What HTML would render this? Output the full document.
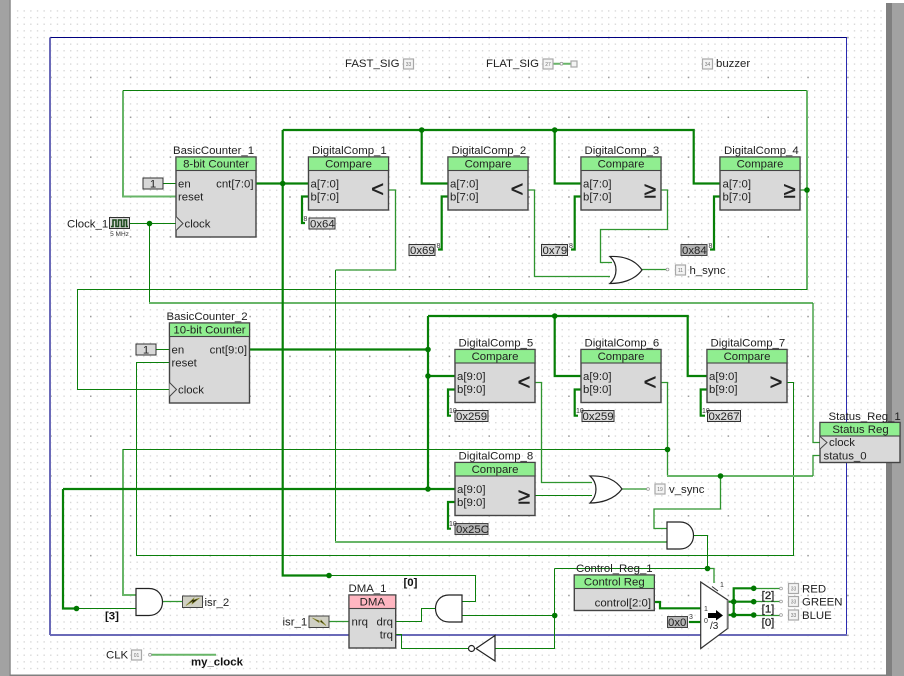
<!DOCTYPE html>
<html><head><meta charset="utf-8"><title>Schematic</title>
<style>
html,body{margin:0;padding:0;background:#fff;width:904px;height:676px;overflow:hidden}
svg{display:block;filter:blur(.3px)}
text{font-family:"Liberation Sans",sans-serif;font-size:11.4px;fill:#222}
.m{text-anchor:middle}.e{text-anchor:end}
.bd{font-weight:bold;fill:#111}
.s{font-size:7px;fill:#333}
.t{fill:none;stroke:#0b7f0b;stroke-width:1}
.b{fill:none;stroke:#68b568;stroke-width:2}
.u{fill:none;stroke:#2f952f;stroke-width:1.3}
.B{fill:none;stroke:#078007;stroke-width:2.2}
.box{fill:#d9d9d9;stroke:#444;stroke-width:1.4}
.hd{fill:#90ee90;stroke:#444;stroke-width:1.1}
.c{fill:#d8d8d8;stroke:#333;stroke-width:1}
.c2{fill:#b4b4b4;stroke:#444;stroke-width:1}
.g{fill:#fff;stroke:#222;stroke-width:1.2}
.j{fill:#007700}
.tm{fill:#f4f4f4;stroke:#a8a8a8;stroke-width:1.2}
.tx{font-size:5px;fill:#777}
.cmp{font-size:22px;fill:#222;stroke:#222;stroke-width:.45}
</style></head><body>
<svg width="904" height="676" viewBox="0 0 904 676" xmlns="http://www.w3.org/2000/svg">
<defs>
<pattern id="mn" x="3.65" y="3.64" width="6.642" height="6.642" patternUnits="userSpaceOnUse"><rect width="1.3" height="1.3" fill="#d2d2d2"/></pattern>
<pattern id="mj" x="10.3" y="36.85" width="39.85" height="39.85" patternUnits="userSpaceOnUse"><rect width="1.5" height="1.5" fill="#9a9a9a"/></pattern>
</defs>
<rect width="904" height="676" fill="#fff"/>
<rect x="14" y="8" width="868" height="664" fill="url(#mn)"/>
<rect x="14" y="8" width="868" height="664" fill="url(#mj)"/>
<rect x="0" y="0" width="9.5" height="676" fill="#a2a2a2"/>
<rect x="9.5" y="0" width="1.2" height="676" fill="#808080"/>
<rect x="886" y="3" width="6" height="673" fill="#808080"/>
<rect x="892" y="3" width="12" height="673" fill="#a2a2a2"/>
<rect x="10" y="674.5" width="882" height="1.5" fill="#808080"/>

<!-- frame -->
<path d="M50 38H847" stroke="#000080" stroke-width="1" fill="none" transform="translate(0,-.5)"/>
<path d="M50 37.5V635" stroke="#6a6ab8" stroke-width="2" fill="none"/>
<path d="M846.5 37.5V635" stroke="#2a2ab0" stroke-width="1" fill="none"/>
<path d="M50 635H847" stroke="#6a6ab8" stroke-width="2" fill="none"/>

<!-- thin wires -->
<path class="b" d="M176 196.5H123V90.5"/>
<path class="t" d="M123 90.5H807"/>
<path class="b" d="M807 90.5V290"/>
<path class="u" d="M800 190H807"/>
<path class="t" d="M807 289.5H77.5V389.5H170"/>
<path class="t" d="M163 183.5H176M130 223.5H176M149.5 223V303"/>
<path class="b" d="M149 303H813"/>
<path class="u" d="M813 303V442.5H820"/>
<path class="t" d="M156 349.5H170"/>
<path class="t" d="M170 362.5H136.5V555.5H793.5V382.5H787"/>
<path class="t" d="M335.5 270V542"/>
<path class="u" d="M389 190H395.5V270H335.5"/>
<path class="b" d="M335 542H667"/>
<path class="u" d="M528.5 190H534.5V276.5H610"/>
<path class="u" d="M661 190H667.5V229.5H600.5V262.5H612"/>
<path class="u" d="M642 269.5H668"/>
<path class="b" d="M123 449V595H136"/>
<path class="t" d="M123 449.5H667.5"/>
<path class="u" d="M534.7 382.5H541.5V482.5H592"/>
<path class="t" d="M534.7 495.5H592"/>
<path class="u" d="M661 382.5H667.5V475.5"/>
<path class="b" d="M667 476H813"/>
<path class="u" d="M813 476V455.5H820"/>
<path class="u" d="M622 489H648"/>
<path class="u" d="M720.5 476V509H654V528.5H667"/>
<path class="t" d="M694 535.5H707.5V568.5"/>
<path class="t" d="M76.5 608.5H136"/>
<path class="u" d="M163 601.5H182"/>
<path class="u" d="M329 621.5H349"/>
<path class="t" d="M329 575.5H475.5V601.5H462"/>
<path class="t" d="M395.7 621.5H421.5V608.5H435"/>
<path class="t" d="M462 615.5H554.5"/>
<path class="t" d="M554.5 568.5V648.5H495"/>
<path class="t" d="M554.5 568.5H707.5"/>
<path class="u" d="M707.5 568.5H714V583"/>
<path class="t" d="M468 648.5H401.5V634.5H395.7"/>
<path class="b" d="M150 654.7H216"/>
<path class="b" d="M553 63.7H571"/>
<path class="u" d="M753.7 588.5H780M753.7 601.5H780M753.7 615.5H780"/>
<path d="M712 586.5L718 591" stroke="#333" stroke-width="1" fill="none"/>

<!-- buses -->
<path class="B" d="M256 183.5H309M282.7 130H693.7V183.5H720M282.7 130V575.5H329"/>
<path class="B" d="M421.7 130V183.5H448M554.7 130V183.5H581"/>
<path class="B" d="M309 196.5H302V223H305"/>
<path class="B" d="M448 196.5H441.7V249.5H438"/>
<path class="B" d="M581 196.5H574.7V249.5H571"/>
<path class="B" d="M720 196.5H714V249.5H710"/>
<path class="B" d="M249.5 349.5H428M428 316V489M428 316H687.7V376H707"/>
<path class="B" d="M554.7 316V376H581M428 376H455M63 489H455M63 489V608.5H76.5"/>
<path class="B" d="M455 389.5H448V415.7H451M581 389.5H574.7V415.7H578M707 389.5H700.7V415.7H705M455 502H448V528.7H451"/>
<path class="B" d="M654 602H660V608.3H700.7"/>
<path class="B" d="M689 622H700.7"/>
<path class="B" d="M727.7 615H753.7M733.7 615V588.3H753.7M727.7 601.7H753.7" />

<!-- junctions -->
<g class="j">
<circle cx="149.5" cy="223.5" r="2.8"/><circle cx="282.7" cy="183.5" r="2.8"/><circle cx="421.7" cy="130" r="2.8"/><circle cx="554.7" cy="130" r="2.8"/>
<circle cx="807" cy="190" r="2.8"/><circle cx="428" cy="349.5" r="2.8"/><circle cx="428" cy="376" r="2.8"/><circle cx="428" cy="489" r="2.8"/>
<circle cx="554.7" cy="316" r="2.8"/><circle cx="667.5" cy="449.5" r="2.8"/><circle cx="720.5" cy="476" r="2.8"/><circle cx="76.5" cy="608.5" r="2.8"/>
<circle cx="329" cy="575.5" r="2.8"/><circle cx="554.7" cy="615.5" r="2.8"/><circle cx="707.5" cy="568.5" r="2.8"/>
<circle cx="733.7" cy="601.7" r="2.8"/><circle cx="733.7" cy="615" r="2.8"/><circle cx="753.7" cy="588.3" r="2.8"/><circle cx="753.7" cy="601.7" r="2.8"/><circle cx="753.7" cy="615" r="2.8"/>
</g>

<!-- counters -->
<rect class="box" x="176" y="157" width="80" height="80"/><rect class="hd" x="176" y="157" width="80" height="13.5"/>
<text x="173" y="154">BasicCounter_1</text><text class="m" x="216" y="167.5">8-bit Counter</text>
<text x="178" y="187.5">en</text><text x="178" y="200.5">reset</text><text x="184.5" y="227.5">clock</text><text class="e" x="253.5" y="187.5">cnt[7:0]</text>
<path d="M176 216.5L183 223.5L176 230.5" fill="#d9d9d9" stroke="#444" stroke-width="1"/>

<rect class="box" x="169.5" y="323" width="80" height="80"/><rect class="hd" x="169.5" y="323" width="80" height="13.5"/>
<text x="166.5" y="320">BasicCounter_2</text><text class="m" x="209.5" y="333.5">10-bit Counter</text>
<text x="171.5" y="353.5">en</text><text x="171.5" y="366.5">reset</text><text x="178" y="393.5">clock</text><text class="e" x="247" y="353.5">cnt[9:0]</text>
<path d="M169.5 382.5L176.5 389.5L169.5 396.5" fill="#d9d9d9" stroke="#444" stroke-width="1"/>

<!-- comparators row 1 -->
<g>
<rect class="box" x="308.5" y="157" width="80" height="53"/><rect class="hd" x="308.5" y="157" width="80" height="13.5"/>
<text x="312" y="154">DigitalComp_1</text><text class="m" x="348.5" y="167.5">Compare</text>
<text x="310.5" y="187.5">a[7:0]</text><text x="310.5" y="200.5">b[7:0]</text><text class="cmp m" x="377.5" y="196.5">&lt;</text>
<rect class="box" x="448" y="157" width="80" height="53"/><rect class="hd" x="448" y="157" width="80" height="13.5"/>
<text x="451.5" y="154">DigitalComp_2</text><text class="m" x="488" y="167.5">Compare</text>
<text x="450" y="187.5">a[7:0]</text><text x="450" y="200.5">b[7:0]</text><text class="cmp m" x="517" y="196.5">&lt;</text>
<rect class="box" x="581" y="157" width="80" height="53"/><rect class="hd" x="581" y="157" width="80" height="13.5"/>
<text x="584.5" y="154">DigitalComp_3</text><text class="m" x="621" y="167.5">Compare</text>
<text x="583" y="187.5">a[7:0]</text><text x="583" y="200.5">b[7:0]</text><text class="cmp m" x="650" y="197.5">≥</text>
<rect class="box" x="720" y="157" width="80" height="53"/><rect class="hd" x="720" y="157" width="80" height="13.5"/>
<text x="724" y="154">DigitalComp_4</text><text class="m" x="760" y="167.5">Compare</text>
<text x="722.5" y="187.5">a[7:0]</text><text x="722.5" y="200.5">b[7:0]</text><text class="cmp m" x="789.5" y="197.5">≥</text>
</g>
<!-- comparators row 2 -->
<g>
<rect class="box" x="455" y="349.5" width="80" height="53"/><rect class="hd" x="455" y="349.5" width="80" height="13.5"/>
<text x="458.5" y="346.5">DigitalComp_5</text><text class="m" x="495" y="360">Compare</text>
<text x="457" y="380">a[9:0]</text><text x="457" y="393">b[9:0]</text><text class="cmp m" x="524" y="389.5">&lt;</text>
<rect class="box" x="581" y="349.5" width="80" height="53"/><rect class="hd" x="581" y="349.5" width="80" height="13.5"/>
<text x="584.5" y="346.5">DigitalComp_6</text><text class="m" x="621" y="360">Compare</text>
<text x="583" y="380">a[9:0]</text><text x="583" y="393">b[9:0]</text><text class="cmp m" x="650" y="389.5">&lt;</text>
<rect class="box" x="707" y="349.5" width="80" height="53"/><rect class="hd" x="707" y="349.5" width="80" height="13.5"/>
<text x="710.5" y="346.5">DigitalComp_7</text><text class="m" x="747" y="360">Compare</text>
<text x="709" y="380">a[9:0]</text><text x="709" y="393">b[9:0]</text><text class="cmp m" x="776" y="389.5">&gt;</text>
<rect class="box" x="455" y="462.5" width="80" height="53"/><rect class="hd" x="455" y="462.5" width="80" height="13.5"/>
<text x="458.5" y="459.5">DigitalComp_8</text><text class="m" x="495" y="473">Compare</text>
<text x="457" y="493">a[9:0]</text><text x="457" y="506">b[9:0]</text><text class="cmp m" x="524" y="503.5">≥</text>
</g>

<!-- constants -->
<rect class="c" x="143" y="178" width="20" height="11"/><text class="m" x="153" y="187.5">1</text>
<rect class="c" x="136" y="344" width="20" height="11"/><text class="m" x="146" y="353.5">1</text>
<rect class="c" x="309" y="218" width="26" height="11"/><text x="310" y="227.5">0x64</text><text class="s" x="303.5" y="221">8</text>
<rect class="c" x="409" y="244.5" width="26" height="11"/><text x="410" y="254">0x69</text><text class="s" x="436.5" y="248">8</text>
<rect class="c" x="541.5" y="244.5" width="26" height="11"/><text x="542.5" y="254">0x79</text><text class="s" x="569" y="248">8</text>
<rect class="c2" x="681" y="244.5" width="26" height="11"/><text x="682" y="254">0x84</text><text class="s" x="708.5" y="248">8</text>
<rect class="c" x="455" y="410.5" width="33" height="11"/><text x="456" y="420">0x259</text><text class="s" x="449" y="413">10</text>
<rect class="c" x="582" y="410.5" width="32" height="11"/><text x="582.5" y="420">0x259</text><text class="s" x="576" y="413">10</text>
<rect class="c" x="707.5" y="410.5" width="33" height="11"/><text x="708.5" y="420">0x267</text><text class="s" x="702" y="413">10</text>
<rect class="c2" x="455" y="523.5" width="33" height="11"/><text x="456" y="533">0x25C</text><text class="s" x="449" y="526">10</text>
<rect class="c2" x="667.5" y="616.5" width="20" height="11"/><text x="668" y="626">0x0</text><text class="s" x="689" y="619">3</text>

<!-- clock -->
<rect x="109.5" y="217.5" width="20" height="11" fill="#d8d8d8" stroke="#333"/>
<path d="M111 226.5H113V220H116V226.5H118.5V220H121.5V226.5H124V220H126.5V226.5H128" fill="none" stroke="#1d4a1d" stroke-width="1.6"/>
<text x="67" y="227.5">Clock_1</text><text class="s m" x="119.5" y="236" style="font-size:6.5px">5 MHz</text>

<!-- gates -->
<path class="g" d="M610 256.5C620 256 634 258 642 270C634 281 620 283.5 610 283.5C618 276 618 264 610 256.5Z"/>
<path class="g" d="M590 476C600 475.5 614 477 622 489C614 500 600 503 590 503C598 495 598 483 590 476Z"/>
<path class="g" d="M667 522H680C698 522 698 549 680 549H667Z"/>
<path class="g" d="M136 588.5H149C167 588.5 167 615.5 149 615.5H136Z"/>
<path class="g" d="M462 595H449C431 595 431 622 449 622H462Z"/>
<path class="g" d="M495 635.5V661L476 648.5Z"/>
<circle class="g" cx="471.5" cy="648.5" r="3"/>

<!-- DMA -->
<rect class="box" x="349" y="595" width="46.7" height="53"/><rect fill="#ffb6c1" stroke="#444" stroke-width="1.1" x="349" y="595" width="46.7" height="13.5"/>
<text x="348.5" y="592">DMA_1</text><text class="m" x="372.3" y="605.5">DMA</text>
<text x="351.5" y="625.5">nrq</text><text class="e" x="393" y="625.5">drq</text><text class="e" x="393" y="638.5">trq</text>

<!-- isr icons -->
<rect x="182.5" y="596" width="20" height="11.5" fill="#d0d0c4" stroke="#444"/>
<path d="M186 605.5L192.5 601.5L192 604L199.5 598L193.5 600L194 598Z" fill="#1c1c08" stroke="#8a8a30" stroke-width=".6"/>
<text x="204.5" y="606">isr_2</text>
<rect x="309" y="616" width="20" height="11.5" fill="#d0d0c4" stroke="#444"/>
<path d="M312.5 618L319 622.5L318.5 620.5L326 625.5L321 620L320.5 621.5Z" fill="#1c1c08" stroke="#8a8a30" stroke-width=".6"/>
<text x="282.5" y="625.5">isr_1</text>

<!-- control reg -->
<rect class="box" x="574.3" y="575" width="80" height="35.5"/><rect class="hd" x="574.3" y="575" width="80" height="13.5"/>
<text x="576" y="572">Control_Reg_1</text><text class="m" x="614.3" y="585.5">Control Reg</text><text class="e" x="651" y="606.5">control[2:0]</text>

<!-- status reg -->
<rect class="box" x="820" y="422.5" width="80" height="40"/><rect class="hd" x="820" y="422.5" width="80" height="13.5"/>
<text x="828.5" y="420">Status_Reg_1</text><text class="m" x="860.5" y="433">Status Reg</text>
<text x="829" y="446">clock</text><text x="823.5" y="459.5">status_0</text>
<path d="M820 436.5L827 442.5L820 449" fill="#d9d9d9" stroke="#444"/>

<!-- mux -->
<path d="M700.7 582L727.7 600V628.5L700.7 648.5Z" fill="#fff" stroke="#333" stroke-width="1.2"/>
<path d="M727.7 600V628.5" stroke="#777" stroke-width="2"/>
<path d="M708 613H716V610L723 615.5L716 620.5V618H708Z" fill="#000"/>
<text class="s" x="704" y="611">1</text><text class="s" x="704" y="623">0</text>
<text x="710" y="629" style="font-size:10px">/3</text><text class="s" x="720" y="587">1</text>

<!-- outputs -->
<g class="tm"><rect x="788.5" y="583.5" width="10" height="10"/><rect x="788.5" y="596.5" width="10" height="10"/><rect x="788.5" y="610" width="10" height="10"/>
<rect x="675.5" y="265" width="10" height="10"/><rect x="655" y="484" width="10" height="10"/>
<rect x="403.5" y="59" width="10" height="10"/><rect x="543" y="59" width="10" height="10"/><rect x="702.5" y="59" width="10" height="10"/><rect x="131.5" y="650" width="10" height="10"/><rect x="571" y="61" width="6" height="6"/></g>
<g class="tx" text-anchor="middle">
<text class="tx" x="793.5" y="590.5">33</text><text class="tx" x="793.5" y="603.5">33</text><text class="tx" x="793.5" y="617">33</text>
<text class="tx" x="680.5" y="272">11</text><text class="tx" x="660" y="491">19</text><text class="tx" x="408.5" y="66">33</text><text class="tx" x="548" y="66">27</text><text class="tx" x="707.5" y="66">34</text><text class="tx" x="136.5" y="657">01</text>
</g>
<g fill="#fff" stroke="#999" stroke-width=".8"><circle cx="781" cy="588.5" r="1.4"/><circle cx="781" cy="601.5" r="1.4"/><circle cx="781" cy="615" r="1.4"/><circle cx="667.5" cy="269.5" r="1.4"/><circle cx="648" cy="489" r="1.4"/><circle cx="561.5" cy="63.7" r="1.4"/><circle cx="150" cy="654.7" r="1.4"/></g>

<text x="802" y="592.5">RED</text><text x="802" y="605.5">GREEN</text><text x="802" y="619">BLUE</text>
<text x="689.5" y="274">h_sync</text><text x="669" y="493">v_sync</text>
<text x="345" y="67">FAST_SIG</text><text x="486" y="67">FLAT_SIG</text><text x="716" y="67">buzzer</text>
<text x="106" y="658.5">CLK</text>
<text class="bd" x="191" y="665.5">my_clock</text>
<text class="bd" x="105" y="619.5">[3]</text><text class="bd" x="403.5" y="586">[0]</text>
<text class="m" x="768" y="599" style="stroke:#222;stroke-width:.25">[2]</text><text class="m" x="768" y="612.5" style="stroke:#222;stroke-width:.25">[1]</text><text class="m" x="768" y="626" style="stroke:#222;stroke-width:.25">[0]</text>
</svg>
</body></html>
